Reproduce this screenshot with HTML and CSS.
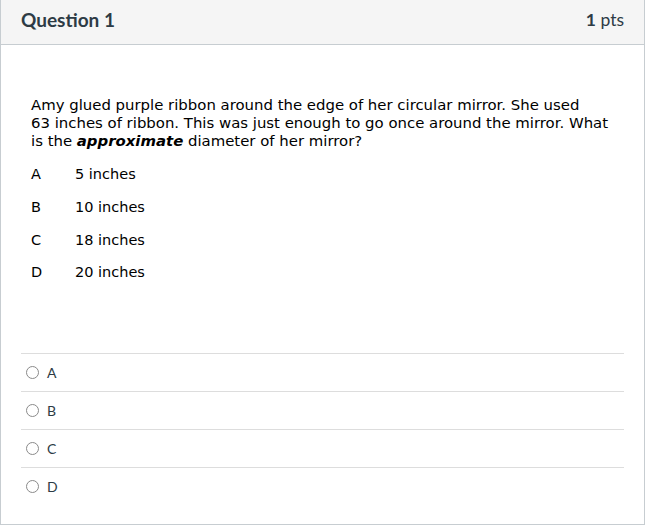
FILE: index.html
```html
<!DOCTYPE html>
<html>
<head>
<meta charset="utf-8">
<link rel="stylesheet" href="styles.css">
</head>
<body>
<div class="card">
  <div class="header">
    <span class="title">Question 1</span>
    <span class="pts"><b>1</b> pts</span>
  </div>
  <div class="content">
    <p class="prompt">Amy glued purple ribbon around the edge of her circular mirror. She used<br>63 inches of ribbon. This was just enough to go once around the mirror. What<br>is the <b><i>approximate</i></b> diameter of her mirror?</p>
    <div class="choices">
      <div class="choice"><span class="letter">A</span><span>5 inches</span></div>
      <div class="choice"><span class="letter">B</span><span>10 inches</span></div>
      <div class="choice"><span class="letter">C</span><span>18 inches</span></div>
      <div class="choice"><span class="letter">D</span><span>20 inches</span></div>
    </div>
    <div class="answers">
      <label class="answer"><span class="radio"></span><span>A</span></label>
      <label class="answer"><span class="radio"></span><span>B</span></label>
      <label class="answer"><span class="radio"></span><span>C</span></label>
      <label class="answer"><span class="radio"></span><span>D</span></label>
    </div>
  </div>
</div>
</body>
</html>
```

FILE: styles.css
```css
html, body {
  margin: 0;
  padding: 0;
  background: #ffffff;
}
.card {
  width: 643px;
  height: 524px;
  border: 1px solid #c7cdd1;
  border-top: none;
  box-sizing: content-box;
  display: flex;
  flex-direction: column;
}
.header {
  flex: none;
  height: 45px;
  box-sizing: border-box;
  padding: 0 20px 5px 20px;
  background: #f5f5f5;
  border-bottom: 1px solid #c7cdd1;
  display: flex;
  align-items: center;
  justify-content: space-between;
  font-family: Lato, "Liberation Sans", sans-serif;
  color: #2d3b45;
}
.title {
  font-size: 19px;
  font-weight: bold;
}
.pts {
  font-size: 17.5px;
  font-weight: normal;
}
.pts b {
  font-weight: bold;
}
.content {
  padding: 51px 20px 0 20px;
}
.prompt {
  margin: 0 0 0 10px;
  font-family: "DejaVu Sans", Verdana, sans-serif;
  font-size: 14.9px;
  line-height: 18px;
  color: #000000;
  white-space: nowrap;
}
.choices {
  margin: 8px 0 0 10px;
  font-family: "DejaVu Sans", Verdana, sans-serif;
  font-size: 14.5px;
  color: #000000;
}
.choice {
  display: flex;
  align-items: center;
  height: 32.7px;
}
.letter {
  width: 44px;
}
.answers {
  margin-top: 64px;
  font-family: Lato, "Liberation Sans", sans-serif;
  font-size: 14px;
  color: #2d3b45;
}
.answer {
  display: flex;
  align-items: center;
  height: 37px;
  border-top: 1px solid #dddddd;
  padding-left: 5px;
  gap: 8px;
}
.radio {
  width: 11px;
  height: 11px;
  border: 1px solid #8a8a8a;
  border-radius: 50%;
  background: #fff;
}
```
